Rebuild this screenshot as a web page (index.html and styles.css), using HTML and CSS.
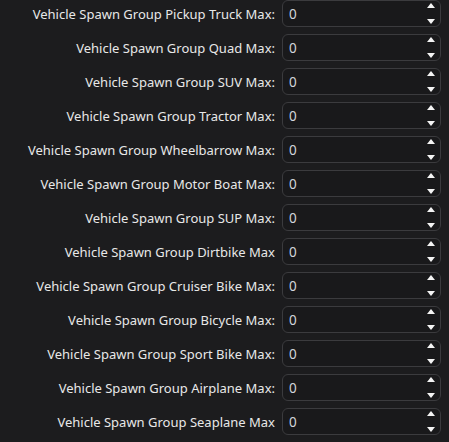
FILE: index.html
```html
<!DOCTYPE html>
<html>
<head>
<meta charset="utf-8">
<link rel="stylesheet" href="styles.css">
</head>
<body>
<div class="form">
  <div class="row"><label class="lbl">Vehicle Spawn Group Pickup Truck Max:</label><div class="spin"><span class="val">0</span><span class="arrows"><span class="up"></span><span class="down"></span></span></div></div>
  <div class="row"><label class="lbl">Vehicle Spawn Group Quad Max:</label><div class="spin"><span class="val">0</span><span class="arrows"><span class="up"></span><span class="down"></span></span></div></div>
  <div class="row"><label class="lbl">Vehicle Spawn Group SUV Max:</label><div class="spin"><span class="val">0</span><span class="arrows"><span class="up"></span><span class="down"></span></span></div></div>
  <div class="row"><label class="lbl">Vehicle Spawn Group Tractor Max:</label><div class="spin"><span class="val">0</span><span class="arrows"><span class="up"></span><span class="down"></span></span></div></div>
  <div class="row"><label class="lbl">Vehicle Spawn Group Wheelbarrow Max:</label><div class="spin"><span class="val">0</span><span class="arrows"><span class="up"></span><span class="down"></span></span></div></div>
  <div class="row"><label class="lbl">Vehicle Spawn Group Motor Boat Max:</label><div class="spin"><span class="val">0</span><span class="arrows"><span class="up"></span><span class="down"></span></span></div></div>
  <div class="row"><label class="lbl">Vehicle Spawn Group SUP Max:</label><div class="spin"><span class="val">0</span><span class="arrows"><span class="up"></span><span class="down"></span></span></div></div>
  <div class="row"><label class="lbl">Vehicle Spawn Group Dirtbike Max</label><div class="spin"><span class="val">0</span><span class="arrows"><span class="up"></span><span class="down"></span></span></div></div>
  <div class="row"><label class="lbl">Vehicle Spawn Group Cruiser Bike Max:</label><div class="spin"><span class="val">0</span><span class="arrows"><span class="up"></span><span class="down"></span></span></div></div>
  <div class="row"><label class="lbl">Vehicle Spawn Group Bicycle Max:</label><div class="spin"><span class="val">0</span><span class="arrows"><span class="up"></span><span class="down"></span></span></div></div>
  <div class="row"><label class="lbl">Vehicle Spawn Group Sport Bike Max:</label><div class="spin"><span class="val">0</span><span class="arrows"><span class="up"></span><span class="down"></span></span></div></div>
  <div class="row"><label class="lbl">Vehicle Spawn Group Airplane Max:</label><div class="spin"><span class="val">0</span><span class="arrows"><span class="up"></span><span class="down"></span></span></div></div>
  <div class="row"><label class="lbl">Vehicle Spawn Group Seaplane Max</label><div class="spin"><span class="val">0</span><span class="arrows"><span class="up"></span><span class="down"></span></span></div></div>
</div>
</body>
</html>
```
FILE: styles.css
```css
html, body {
  margin: 0;
  padding: 0;
  background: #1c1c1e;
  height: 100%;
  overflow: hidden;
}
.form {
  display: flex;
  flex-direction: column;
  gap: 7px;
  padding-top: 0;
  font-family: "Noto Sans", "Open Sans", sans-serif;
  font-size: 13px;
}
.row {
  display: grid;
  grid-template-columns: 275px 159px;
  column-gap: 7px;
  align-items: center;
  height: 27px;
}
.lbl {
  text-align: right;
  color: #e8e8e8;
  white-space: nowrap;
  padding-top: 1px;
}
.spin {
  box-sizing: border-box;
  height: 27px;
  border: 1px solid #3b3b3e;
  border-radius: 6px;
  background: #19191b;
  display: flex;
  align-items: center;
  justify-content: space-between;
  padding: 0 5px 0 6px;
}
.val {
  color: #d2d6dc;
  font-size: 13.5px;
}
.arrows {
  display: flex;
  flex-direction: column;
  justify-content: space-between;
  height: 21px;
  margin-top: 0;
}
.up, .down {
  width: 0;
  height: 0;
  border-left: 4.5px solid transparent;
  border-right: 4.5px solid transparent;
}
.up {
  border-bottom: 5px solid #f4f4f4;
}
.down {
  border-top: 5px solid #f4f4f4;
}
```
